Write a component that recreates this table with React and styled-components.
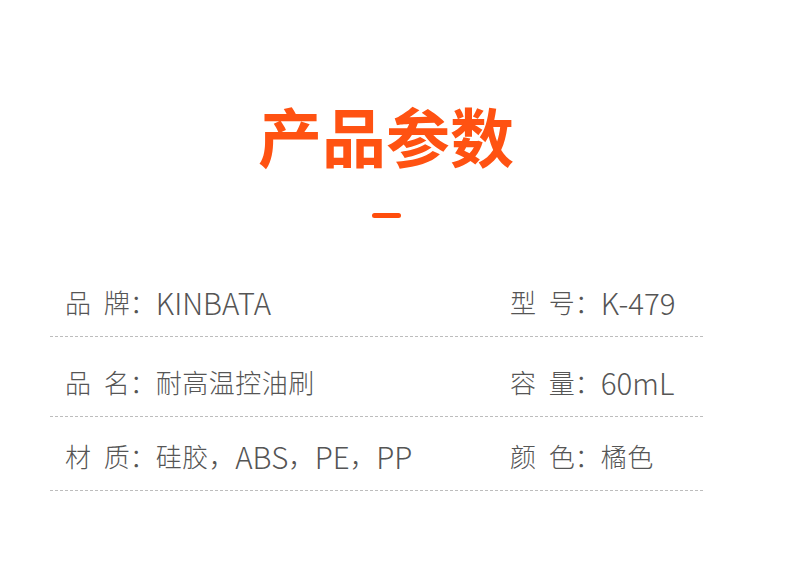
import React from 'react';
import styled, { createGlobalStyle } from 'styled-components';

const GlobalStyle = createGlobalStyle`
  html, body {
    margin: 0;
    padding: 0;
    background: #fff;
  }
  body {
    font-family: "Noto Sans CJK SC", "Noto Sans", sans-serif;
  }
`;

const Page = styled.div`
  width: 790px;
  height: 562px;
  background: #fff;
  overflow: hidden;
`;

const Header = styled.div`
  width: 772px;
  padding-top: 102px;
  display: flex;
  flex-direction: column;
  align-items: center;
`;

const Title = styled.h1`
  margin: 0;
  font-size: 64px;
  line-height: 64px;
  font-weight: 700;
  color: #ff5212;
`;

const Dash = styled.div`
  width: 29px;
  height: 5px;
  margin-top: 47px;
  border-radius: 3px;
  background: #ff4d0c;
`;

const Table = styled.div`
  width: 653px;
  margin: 39px 0 0 50px;
`;

const Row = styled.div`
  display: flex;
  align-items: flex-end;
  padding-top: ${(p) => p.$top}px;
  padding-bottom: 19px;
  border-bottom: 1px dashed #bdbdbd;
`;

const Cell = styled.div`
  width: ${(p) => p.$width}px;
  padding-left: ${(p) => p.$indent}px;
  box-sizing: border-box;
  font-size: 26px;
  line-height: 30px;
  font-weight: 300;
  color: #555;
  white-space: nowrap;
`;

const Label = styled.span`
  word-spacing: 7px;
`;

const Value = styled.span`
  letter-spacing: 0.5px;
`;

// latin runs are drawn a little larger than the cjk text, as in the picture
const Latin = styled.span`
  font-size: 29.5px;
  letter-spacing: 0;
  vertical-align: -2px;
`;

const renderValue = (text) => {
  const parts = text.split(/([A-Za-z0-9\-]+)/).filter(Boolean);
  return parts.map((part, i) =>
    /[A-Za-z0-9]/.test(part) ? <Latin key={i}>{part}</Latin> : <span key={i}>{part}</span>
  );
};

const rows = [
  { top: 30, left: ['品 牌：', 'KINBATA'], right: ['型 号：', 'K-479'] },
  { top: 30, left: ['品 名：', '耐高温控油刷'], right: ['容 量：', '60mL'] },
  { top: 24, left: ['材 质：', '硅胶，ABS，PE，PP'], right: ['颜 色：', '橘色'] },
];

const App = () => {
  return (
    <Page>
      <GlobalStyle />
      <Header>
        <Title>产品参数</Title>
        <Dash />
      </Header>
      <Table>
        {rows.map((row) => (
          <Row key={row.left[0]} $top={row.top}>
            <Cell $width={460} $indent={15}>
              <Label>{row.left[0]}</Label>
              <Value>{renderValue(row.left[1])}</Value>
            </Cell>
            <Cell $width={193} $indent={0}>
              <Label>{row.right[0]}</Label>
              <Value>{renderValue(row.right[1])}</Value>
            </Cell>
          </Row>
        ))}
      </Table>
    </Page>
  );
};

export default App;
